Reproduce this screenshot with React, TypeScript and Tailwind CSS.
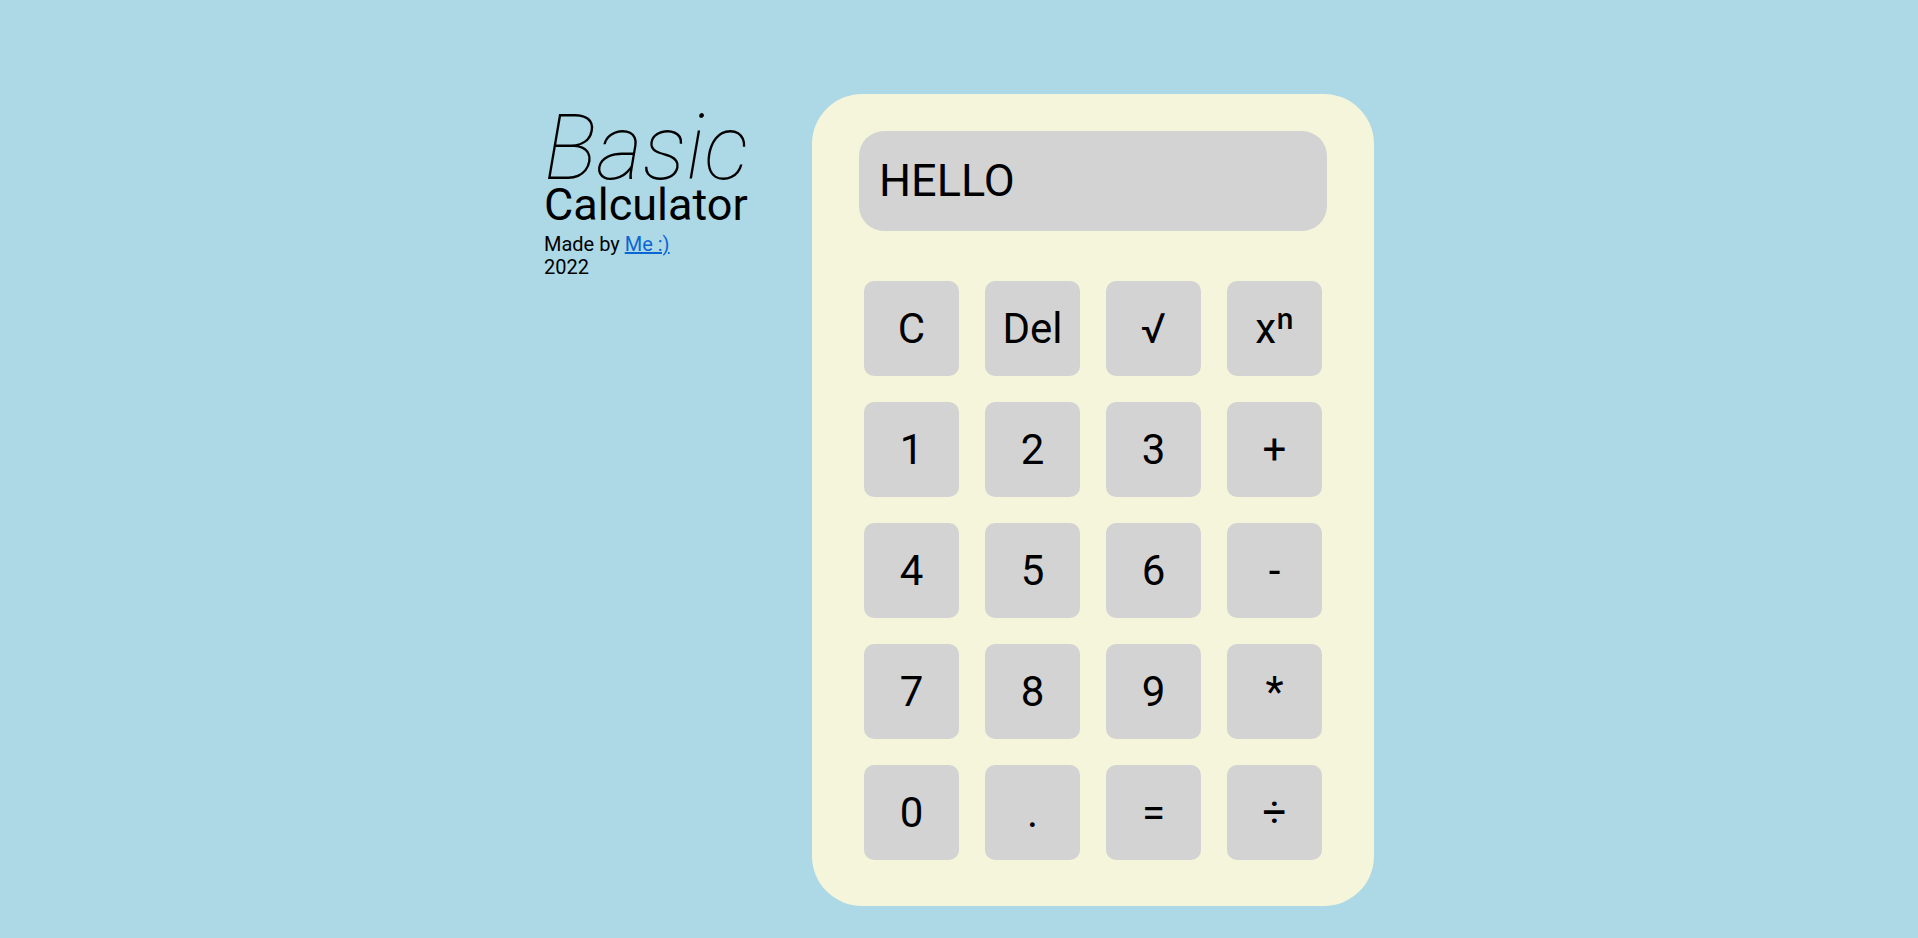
import React from "react";

const keys = ["C", "Del", "√", "xⁿ", "1", "2", "3", "+", "4", "5", "6", "-", "7", "8", "9", "*", "0", ".", "=", "÷"];

export default function App() {
  return (
    <main className="min-h-screen bg-[#add8e6] flex justify-center items-start gap-[66px] pt-[94px] font-['Roboto',sans-serif] text-black">
      <div className="w-[202px] shrink-0">
        <h1 className="mt-[10px] text-[90px] leading-[90px] font-thin italic">Basic</h1>
        <h2 className="-mt-[12px] text-[45px] leading-[45px] font-normal">Calculator</h2>
        <p className="mt-[6px] text-[20px] leading-[23.4px]">
          Made by <a href="#" className="text-[#0a66d2] underline">Me :)</a>
        </p>
        <p className="text-[20px] leading-[23.4px]">2022</p>
      </div>

      <div className="w-[562px] shrink-0 rounded-[50px] bg-[#f5f5dc] pt-[37px] px-[47px] pb-[46px]">
        <div className="h-[100px] rounded-[25px] bg-[#d3d3d3] flex items-center pl-[20px] text-[45px]">
          HELLO
        </div>
        <div className="mt-[50px] mx-[5px] grid grid-cols-4 gap-x-[26px] gap-y-[26px]">
          {keys.map((k) => (
            <button key={k} className="h-[95px] rounded-[10px] bg-[#d3d3d3] flex items-center justify-center text-[42px]">
              {k}
            </button>
          ))}
        </div>
      </div>
    </main>
  );
}
